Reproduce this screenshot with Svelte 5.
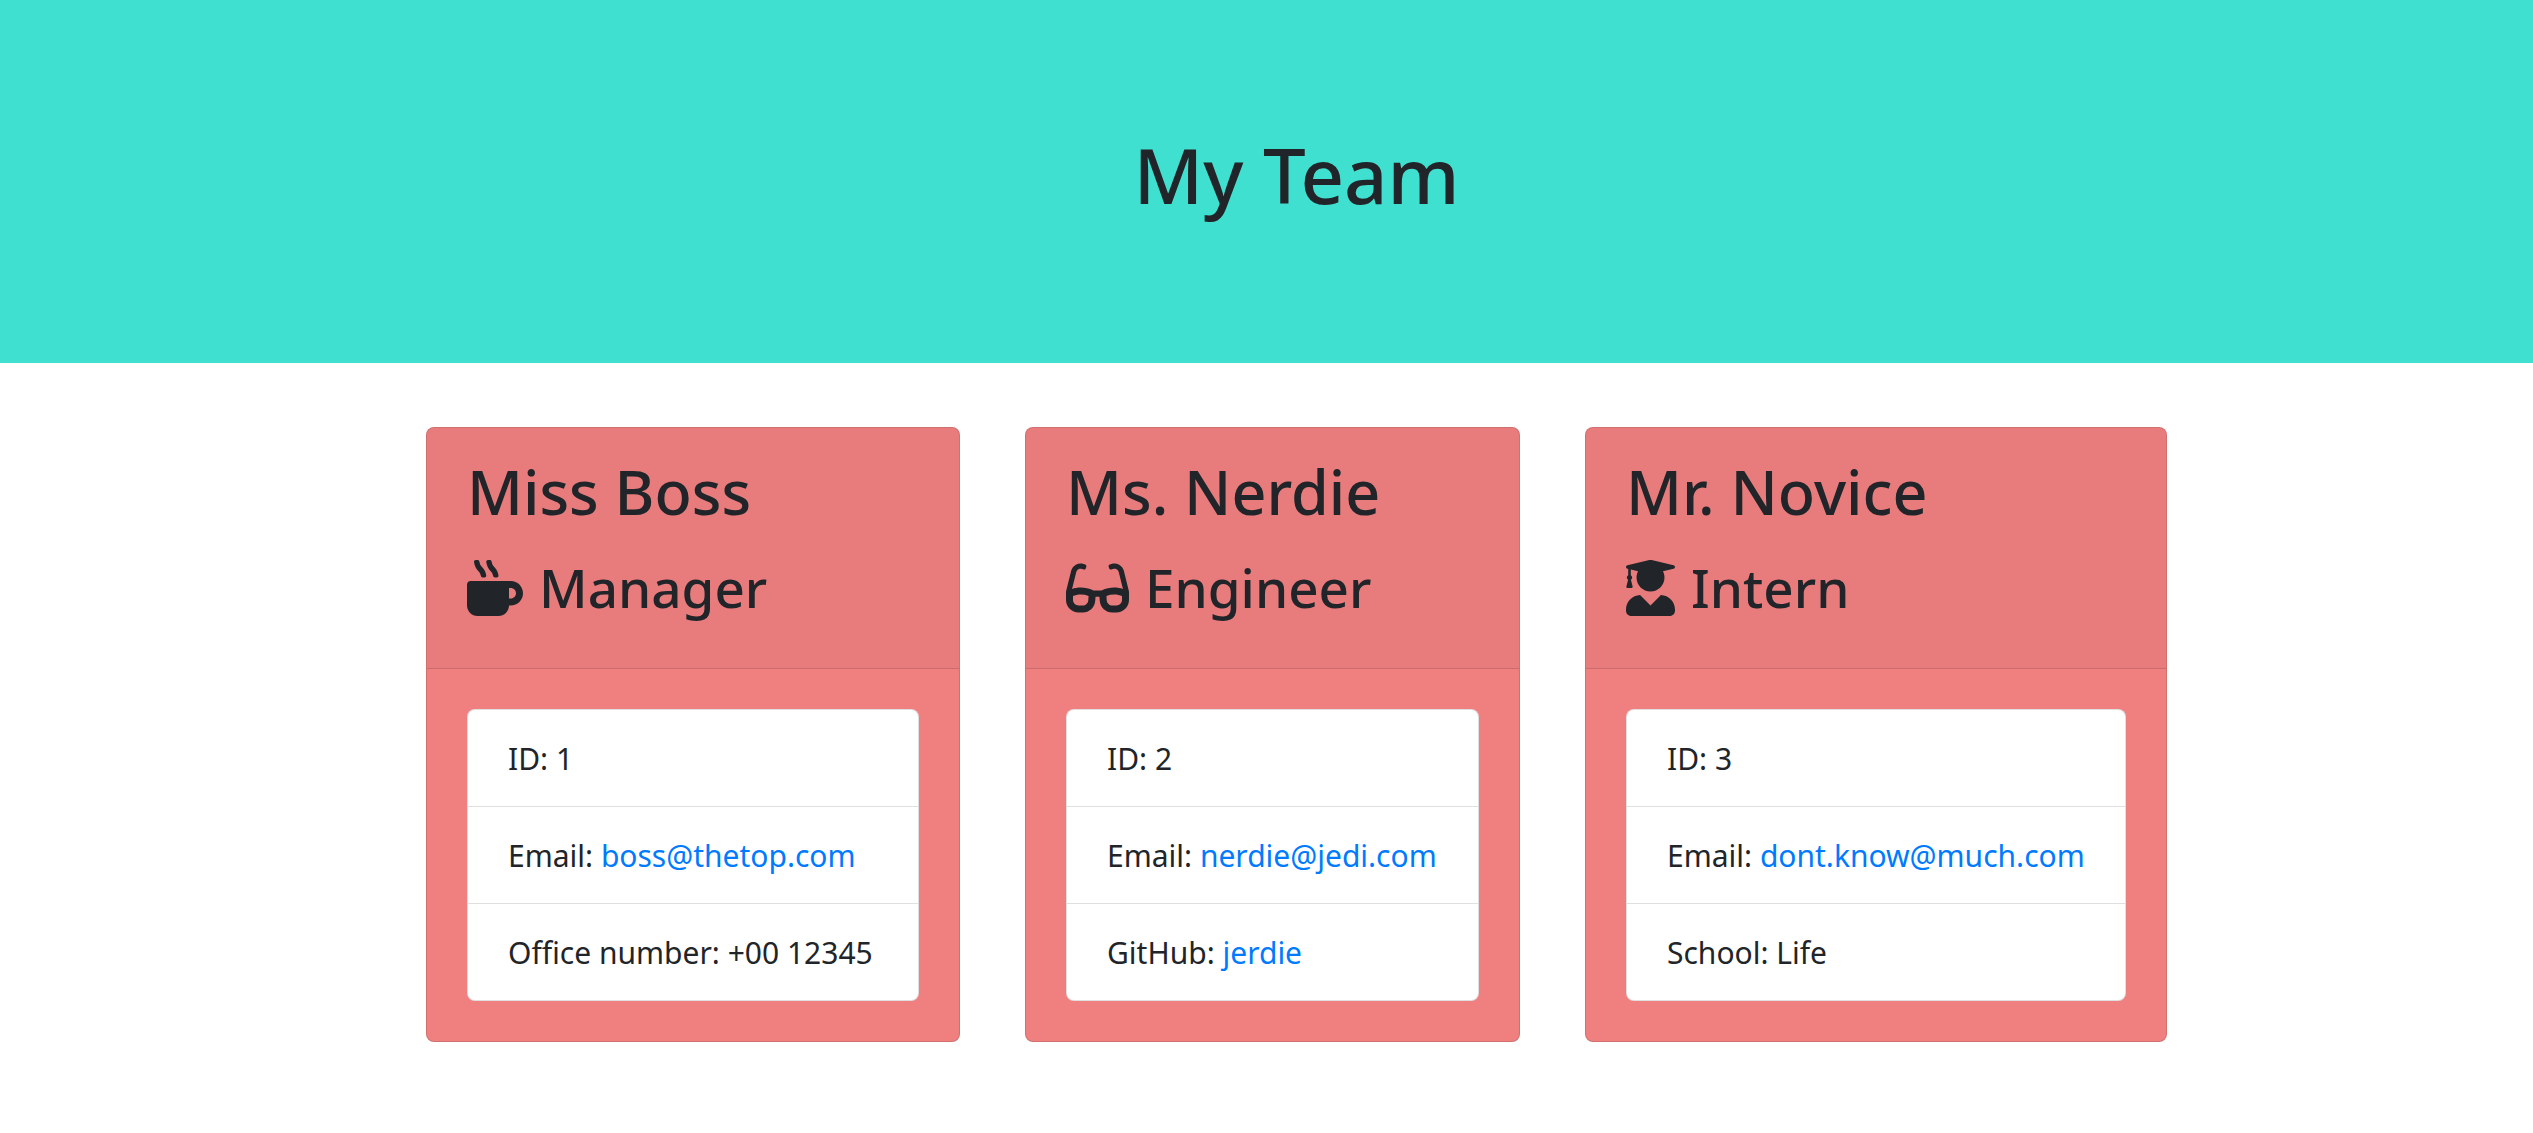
<script>
  const team = [
    {
      name: 'Miss Boss',
      role: 'Manager',
      icon: {
        width: 512,
        path: 'M127.1 146.5c1.3 7.7 8 13.5 16 13.5h16.5c9.8 0 17.6-8.5 16.3-18-3.8-28.2-16.4-54.2-36.6-74.7-14.4-14.7-23.6-33.3-26.4-53.5C111.8 5.9 105 0 96.8 0H80.4C70.6 0 63 8.5 64.1 18c3.9 31.9 18 61.3 40.6 84.4 12 12.2 19.7 27.5 22.4 44.1zm112 0c1.3 7.7 8 13.5 16 13.5h16.5c9.8 0 17.6-8.5 16.3-18-3.8-28.2-16.4-54.2-36.6-74.7-14.4-14.7-23.6-33.3-26.4-53.5C223.8 5.9 217 0 208.8 0h-16.4c-9.8 0-17.5 8.5-16.3 18 3.9 31.9 18 61.3 40.6 84.4 12 12.2 19.7 27.5 22.4 44.1zM400 192H32c-17.7 0-32 14.3-32 32v192c0 53 43 96 96 96h192c53 0 96-43 96-96h16c61.8 0 112-50.2 112-112s-50.2-112-112-112zm0 160h-16v-96h16c26.5 0 48 21.5 48 48s-21.5 48-48 48z',
      },
      details: [
        { label: 'ID', value: '1' },
        { label: 'Email', value: 'boss@thetop.com', href: 'mailto:boss@thetop.com' },
        { label: 'Office number', value: '+00 12345' },
      ],
    },
    {
      name: 'Ms. Nerdie',
      role: 'Engineer',
      icon: {
        width: 576,
        path: 'M574.1 280.37L528.75 98.66c-5.91-23.7-21.59-44.05-43-55.81-21.44-11.73-46.97-14.11-70.19-6.33l-15.25 5.08c-8.39 2.79-12.92 11.86-10.12 20.24l5.06 15.18c2.79 8.38 11.85 12.91 20.23 10.12l13.18-4.39c10.87-3.62 23-3.57 33.16 1.73 10.29 5.37 17.57 14.56 20.37 25.82l38.46 153.82c-22.19-6.81-49.79-12.46-81.2-12.46-34.77 0-73.98 7.02-114.85 26.74h-73.18c-40.87-19.74-80.08-26.75-114.86-26.75-31.42 0-59.02 5.65-81.21 12.46l38.46-153.83c2.79-11.25 10.09-20.45 20.38-25.81 10.16-5.3 22.28-5.35 33.15-1.73l13.17 4.39c8.38 2.79 17.44-1.74 20.23-10.12l5.06-15.18c2.8-8.38-1.73-17.45-10.12-20.24l-15.25-5.08c-23.22-7.78-48.75-5.41-70.19 6.33-21.41 11.77-37.09 32.11-43 55.8L1.9 280.37A64.218 64.218 0 0 0 0 295.86v70.25C0 429.01 51.58 480 115.2 480h37.12c60.28 0 110.37-45.94 114.88-105.37l2.93-38.63h35.75l2.93 38.63C313.31 434.06 363.4 480 423.68 480h37.12c63.62 0 115.2-50.99 115.2-113.88v-70.25c0-5.23-.64-10.43-1.9-15.5zm-370.72 89.42c-1.97 25.91-24.4 46.21-51.06 46.21H115.2C86.97 416 64 393.62 64 366.11v-37.54c18.12-6.49 43.42-12.92 72.58-12.92 23.86 0 47.26 4.33 69.93 12.92l-3.13 41.22zM512 366.12c0 27.51-22.97 49.88-51.2 49.88h-37.12c-26.67 0-49.1-20.3-51.06-46.21l-3.13-41.22c22.67-8.59 46.08-12.92 69.95-12.92 29.12 0 54.43 6.44 72.55 12.93v37.54z',
      },
      details: [
        { label: 'ID', value: '2' },
        { label: 'Email', value: 'nerdie@jedi.com', href: 'mailto:nerdie@jedi.com' },
        { label: 'GitHub', value: 'jerdie', href: 'https://github.com/jerdie' },
      ],
    },
    {
      name: 'Mr. Novice',
      role: 'Intern',
      icon: {
        width: 448,
        path: 'M319.4 320.6L224 416l-95.4-95.4C57.1 323.7 0 382.2 0 454.4v9.6c0 26.5 21.5 48 48 48h352c26.5 0 48-21.5 48-48v-9.6c0-72.2-57.1-130.7-128.6-133.8zM13.6 79.8l6.4 1.5v58.4c-7 4.2-12 11.5-12 20.3 0 8.4 4.6 15.4 11.1 19.7L3.5 242c-1.7 6.9 2.1 14 7.6 14h41.8c5.5 0 9.3-7.1 7.6-14l-15.6-62.3C51.4 175.4 56 168.4 56 160c0-8.8-5-16.1-12-20.3V87.1l66 15.9c-8.6 17.2-14 36.4-14 57 0 70.7 57.3 128 128 128s128-57.3 128-128c0-20.6-5.3-39.8-14-57l96.3-23.2c18.2-4.4 18.2-27.1 0-31.5l-190.4-46c-13-3.1-26.7-3.1-39.7 0L13.6 48.2c-18.1 4.4-18.1 27.2 0 31.6z',
      },
      details: [
        { label: 'ID', value: '3' },
        { label: 'Email', value: 'dont.know@much.com', href: 'mailto:dont.know@much.com' },
        { label: 'School', value: 'Life' },
      ],
    },
  ];
</script>

<header class="banner">
  <h1>My Team</h1>
</header>

<main class="team">
  <div class="cards">
    {#each team as member}
      <article class="card">
        <div class="card-header">
          <h2>{member.name}</h2>
          <h3>
            <svg class="icon" viewBox="0 0 {member.icon.width} 512" aria-hidden="true">
              <path d={member.icon.path} />
            </svg>
            {member.role}
          </h3>
        </div>
        <div class="card-body">
          <ul>
            {#each member.details as item}
              <li>
                {item.label}:
                {#if item.href}<a href={item.href}>{item.value}</a>{:else}{item.value}{/if}
              </li>
            {/each}
          </ul>
        </div>
      </article>
    {/each}
  </div>
</main>

<style>
  :global(body) {
    background: #fff;
    color: #212529;
    font-family: 'Segoe UI', 'Noto Sans', 'Open Sans', sans-serif;
    font-size: 30px;
    line-height: 48px;
  }

  h1,
  h2,
  h3 {
    margin: 0;
    font-weight: 550;
  }

  .banner {
    padding: 127px 0 140px 60px;
    background: #40e0d0;
    text-align: center;
  }

  h1 {
    font-size: 76px;
    line-height: 96px;
  }

  .team {
    padding: 64px 0 64px 60px;
  }

  .cards {
    display: grid;
    grid-template-columns: 534fr 495fr 582fr;
    gap: 65px;
    max-width: 1741px;
    margin: 0 auto;
  }

  .card {
    border: 1px solid rgba(0, 0, 0, 0.125);
    border-radius: 8px;
    background: #f08080;
    overflow: hidden;
  }

  .card-header {
    padding: 25px 40px 47px;
    border-bottom: 1px solid rgba(0, 0, 0, 0.125);
    background: rgba(0, 0, 0, 0.03);
  }

  h2 {
    margin-bottom: 24px;
    font-size: 61px;
    line-height: 77px;
  }

  h3 {
    display: flex;
    align-items: center;
    gap: 16px;
    font-size: 53px;
    line-height: 67px;
  }

  .icon {
    height: 56px;
    flex: none;
    fill: currentColor;
  }

  .card-body {
    padding: 40px;
  }

  ul {
    margin: 0;
    padding: 0;
    list-style: none;
    border: 1px solid rgba(0, 0, 0, 0.125);
    border-radius: 8px;
    background: #fff;
  }

  li {
    padding: 25px 40px 23px;
    white-space: nowrap;
  }

  li + li {
    border-top: 1px solid #dfdfdf;
  }

  a {
    color: #007bff;
    text-decoration: none;
  }

  a:hover {
    text-decoration: underline;
  }
</style>
